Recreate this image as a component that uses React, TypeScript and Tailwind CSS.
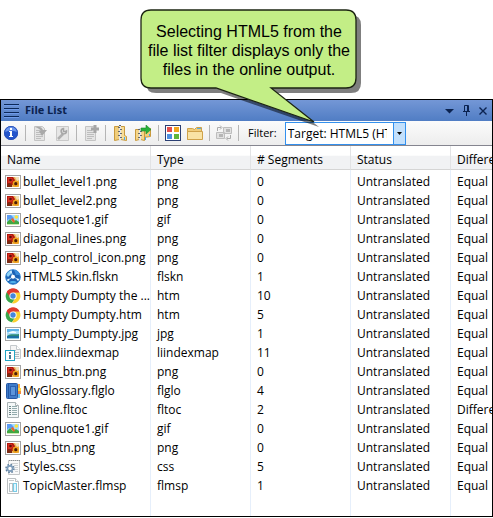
import type { ReactNode } from "react";

type IconKind =
  | "png" | "gif" | "jpg" | "skin" | "chrome" | "index" | "book" | "toc" | "css" | "master";

interface FileRow {
  name: string;
  type: string;
  segments: number;
  difference: string;
  icon: IconKind;
}

const files: FileRow[] = [
  { name: "bullet_level1.png", type: "png", segments: 0, difference: "Equal", icon: "png" },
  { name: "bullet_level2.png", type: "png", segments: 0, difference: "Equal", icon: "png" },
  { name: "closequote1.gif", type: "gif", segments: 0, difference: "Equal", icon: "gif" },
  { name: "diagonal_lines.png", type: "png", segments: 0, difference: "Equal", icon: "png" },
  { name: "help_control_icon.png", type: "png", segments: 0, difference: "Equal", icon: "png" },
  { name: "HTML5 Skin.flskn", type: "flskn", segments: 1, difference: "Equal", icon: "skin" },
  { name: "Humpty Dumpty the ...", type: "htm", segments: 10, difference: "Equal", icon: "chrome" },
  { name: "Humpty Dumpty.htm", type: "htm", segments: 5, difference: "Equal", icon: "chrome" },
  { name: "Humpty_Dumpty.jpg", type: "jpg", segments: 1, difference: "Equal", icon: "jpg" },
  { name: "Index.liindexmap", type: "liindexmap", segments: 11, difference: "Equal", icon: "index" },
  { name: "minus_btn.png", type: "png", segments: 0, difference: "Equal", icon: "png" },
  { name: "MyGlossary.flglo", type: "flglo", segments: 4, difference: "Equal", icon: "book" },
  { name: "Online.fltoc", type: "fltoc", segments: 2, difference: "Different", icon: "toc" },
  { name: "openquote1.gif", type: "gif", segments: 0, difference: "Equal", icon: "gif" },
  { name: "plus_btn.png", type: "png", segments: 0, difference: "Equal", icon: "png" },
  { name: "Styles.css", type: "css", segments: 5, difference: "Equal", icon: "css" },
  { name: "TopicMaster.flmsp", type: "flmsp", segments: 1, difference: "Equal", icon: "master" },
];

function PictureFrame({ sky, children }: { sky: string; children: ReactNode }) {
  return (
    <>
      <rect x="0.5" y="1.5" width="15" height="13" fill="#fff" stroke="#a3a3a3" />
      <rect x="2" y="3" width="12" height="10" fill={sky} />
      {children}
    </>
  );
}

const fileIcons: Record<IconKind, ReactNode> = {
  png: (
    <PictureFrame sky="#e9b45c">
      <path d="M2 3h6l2 3v3l-2 2H2z" fill="#b3160f" />
      <path d="M3 4h4l1 3-2 2H3z" fill="#d8331f" />
      <circle cx="5.5" cy="6" r="1.3" fill="#5c0d08" />
      <path d="M2 10l3-1 2 2v2H2z" fill="#7c2a12" />
      <circle cx="10.8" cy="9.7" r="3.2" fill="#f0a01c" />
      <circle cx="10.8" cy="9.7" r="1.6" fill="#4a1b08" />
      <path d="M10 3h4v3l-2 1z" fill="#f3dfb6" />
    </PictureFrame>
  ),
  gif: (
    <PictureFrame sky="#a5dcff">
      <path d="M2 3h4l3 3-2 2-3-1-2 2z" fill="#5a9cf4" />
      <circle cx="11.3" cy="5" r="1.8" fill="#ffe23a" />
      <path d="M2 12v-2l3-3 3 3 3-2 3 2v2z" fill="#3fa843" />
      <path d="M6 7l2-1 2 3-1 2-2-2z" fill="#e8622a" />
      <path d="M2 12h12v1H2z" fill="#c9ecae" />
    </PictureFrame>
  ),
  jpg: (
    <PictureFrame sky="#a9dcf8">
      <path d="M2 3h12v2H8L5 6H2z" fill="#5eb3e8" />
      <path d="M4 6l4-1 3 1v1H4z" fill="#f4fcff" />
      <path d="M2 10c4-3 8-1 12-2v3H2z" fill="#2d8a7a" />
      <path d="M2 10h12v3H2z" fill="#1c6fa4" />
      <path d="M2 12h12v1H2z" fill="#8ec9e4" />
    </PictureFrame>
  ),
  skin: (
    <>
      <circle cx="8" cy="8" r="7.3" fill="#1c62b4" stroke="#2f83cf" />
      <path d="M1.500 6A7 7 0 0 1 7 1.200L6 5 3 8z" fill="#8fd3f7" />
      <path d="M9 1a7 7 0 0 1 5.700 5L11 6z" fill="#3a8ddb" />
      <path d="M6 2.500l2 5M8 7.500l-5.500 4M8 7.500l6 3.500" stroke="#bfe4fb" strokeWidth="0.900" />
      <path d="M4 13c2.500 1.700 5.500 1.700 8 0-2-1.500-6-1.500-8 0z" fill="#4fb0ea" />
      <circle cx="8" cy="7.800" r="2" fill="#fff" />
      <circle cx="3.300" cy="10.800" r="1.100" fill="#e2f4ff" />
      <circle cx="12.800" cy="10.600" r="1.100" fill="#e2f4ff" />
      <circle cx="6" cy="2.900" r="0.900" fill="#e2f4ff" />
    </>
  ),
  chrome: (
    <>
      <path d="M8 8L1.7 4.2A7.3 7.3 0 0 1 14.5 4.6L8 4.8z" fill="#df3a2c" />
      <path d="M8 8L1.7 4.2A7.3 7.3 0 0 0 7 15.2L10.6 9.8z" fill="#3aa64b" />
      <path d="M8 4.6h6.5A7.3 7.3 0 0 1 7 15.3l3.8-5.5z" fill="#fbd02d" />
      <path d="M8 4.6h6.5A7.3 7.3 0 0 0 1.7 4.2L4.9 9z" fill="#df3a2c" />
      <circle cx="8" cy="8" r="3.6" fill="#fff" />
      <circle cx="8" cy="8" r="2.7" fill="#4386dc" />
    </>
  ),
  index: (
    <>
      <path d="M5.5.5h6l4 4v9h-10z" fill="#f5f5f5" stroke="#c4c9cc" />
      <path d="M11.5.5v4h4" fill="#fff" stroke="#c4c9cc" />
      <path d="M7 5.500h4M10 7.500h4M10 9.500h4M10 11.500h4" stroke="#b4babd" />
      <rect x="0.500" y="5.500" width="9" height="10" fill="#fff" stroke="#22a5c4" />
      <path d="M5 7v2M5 10v4" stroke="#1a5a78" strokeWidth="1.600" />
    </>
  ),
  book: (
    <>
      <path d="M12 1h2v14h-2z" fill="#fff" />
      <path d="M13 1h2v4h-2z" fill="#f7a93c" />
      <path d="M13 5h3v3h-3z" fill="#ffd63e" />
      <path d="M13 8h3v3h-3z" fill="#f28a3c" />
      <path d="M13 11h2v4h-2z" fill="#6cc0ec" />
      <rect x="1.500" y="0.500" width="11" height="15" rx="1" fill="#3f7cc9" stroke="#2558a6" />
      <path d="M3.500 1v14" stroke="#2558a6" />
      <rect x="5.500" y="3.500" width="5" height="9" fill="#5b95dc" stroke="#2a60ae" />
    </>
  ),
  toc: (
    <>
      <path d="M2.500.5h8l3 3v12h-11z" fill="#f4f8f8" stroke="#a9b2b4" />
      <path d="M10.500.5v3h3" fill="#fff" stroke="#a9b2b4" />
      <path d="M4 4.500h2M4 6.500h2M4 8.500h2M4 10.500h2M4 12.500h2" stroke="#6d8688" />
      <path d="M7 4.500h5M7 6.500h5M7 8.500h5M7 10.500h5M7 12.500h5" stroke="#93abad" />
    </>
  ),
  css: (
    <>
      <path d="M3.500 1.500h11v14h-11z" fill="#fafafa" stroke="#c3c6c8" />
      <path d="M4 1.500h11" stroke="#8b9093" strokeDasharray="1 1" />
      <path d="M6 4.500h7M9 6.500h4M10 8.500h3M10 10.500h3M10 12.500h3" stroke="#d0d3d5" />
      <circle cx="5" cy="9.500" r="3.900" fill="none" stroke="#5d7d9c" strokeWidth="1.700" strokeDasharray="1.600 1.460" />
      <circle cx="5" cy="9.500" r="2.600" fill="#fff" stroke="#7d9cba" strokeWidth="1.700" />
    </>
  ),
  master: (
    <>
      <path d="M2.500.5h8l3 3v12h-11z" fill="#fff" stroke="#bcc0c2" />
      <path d="M10.500.5v3h3" fill="#fff" stroke="#bcc0c2" />
      <path d="M4 2.500h5" stroke="#c6cacc" />
      <rect x="4.500" y="5.500" width="3" height="8" fill="#fff" stroke="#b9c2c6" />
      <rect x="8.500" y="5.500" width="3" height="8" fill="#e0f6fd" stroke="#79cbe6" />
    </>
  ),
};

function FileIcon({ kind }: { kind: IconKind }) {
  return (
    <svg viewBox="0 0 16 16" className="size-4 shrink-0" aria-hidden="true">
      {fileIcons[kind]}
    </svg>
  );
}

function ToolButton({ label, disabled, wide, children }: {
  label: string;
  disabled?: boolean;
  wide?: boolean;
  children: ReactNode;
}) {
  return (
    <button type="button" aria-label={label} disabled={disabled} className="shrink-0">
      <svg viewBox={wide ? "0 0 18 16" : "0 0 16 16"} className={wide ? "h-4 w-[18px]" : "size-4"}>
        {children}
      </svg>
    </button>
  );
}

function Separator() {
  return <span className="h-4 w-px shrink-0 bg-[#b5b5b5]" />;
}

function GreyPage() {
  return (
    <>
      <path d="M2.500 1.500h8l2 2v12h-10z" fill="#e4e4e4" stroke="#c4c4c4" />
      <path d="M4 5.500h5M4 7.500h7M4 9.500h7M4 11.500h7M4 13.500h5" stroke="#bdbdbd" />
    </>
  );
}

function Toolbar() {
  return (
    <div className="flex h-[25px] items-center gap-[6px] border-b border-[#85858f] bg-linear-to-b from-[#fbfbfb] to-[#ededed] pl-[2px]">
      <ToolButton label="Information">
        <circle cx="8" cy="8" r="7" fill="#2455cc" />
        <path d="M2 7a6 6 0 0 1 12 0c-4-2-8-2-12 0z" fill="#6d97ee" />
        <circle cx="8" cy="8" r="6.500" fill="none" stroke="#2a52b8" />
        <path d="M7 3h2v2H7zM6 6h3v5h1v1H6v-1h1V7H6z" fill="#fff" />
      </ToolButton>
      <Separator />
      <ToolButton label="Open file" disabled>
        <GreyPage />
        <path d="M3 2c4-1 7 0 8 3h4l-5 6-3-5h2C8 4 6 3 3 2z" fill="#a9a9a9" />
      </ToolButton>
      <ToolButton label="File properties" disabled>
        <path d="M2.500 1.500h12v14h-12z" fill="#e6e6e6" stroke="#c9c9c9" />
        <path d="M4 14l5-5" stroke="#b0b0b0" strokeWidth="2.500" />
        <path d="M12.500 6a2.700 2.700 0 1 1-3-2.500v3h2z" fill="none" stroke="#a6a6a6" strokeWidth="1.500" />
      </ToolButton>
      <Separator />
      <ToolButton label="Add file" disabled>
        <GreyPage />
        <path d="M12 0v8M8 4h8" stroke="#a6a6a6" strokeWidth="3" />
      </ToolButton>
      <Separator />
      <ToolButton label="Archive">
        <path d="M2.500 1.500h5v13l-5 1z" fill="#f0cd7b" stroke="#c99a3d" />
        <path d="M8.500 1.500h4v9l2 1v4l-6-1z" fill="#f6dc98" stroke="#c99a3d" />
        <path d="M7 0h2v16H7z" fill="#e5e5e5" />
        <path d="M7 .5h2M6 2.500h2M8 4.500h2M6 6.500h2M8 8.500h2M6 10.500h2M8 12.500h2" stroke="#62666c" />
        <path d="M12.500 12v3" stroke="#4aa8e8" />
      </ToolButton>
      <ToolButton label="Extract archive" wide>
        <path d="M9.500 3.500h7v8l-7 1z" fill="#f0cd7b" stroke="#c99a3d" />
        <path d="M1.500 4.500h4v10l-4 1zM6.500 4.500h4v11l-4-1z" fill="#f4d58a" stroke="#c99a3d" />
        <path d="M5 3h2v13H5z" fill="#e5e5e5" />
        <path d="M4 4.500h2M6 6.500h2M4 8.500h2M6 10.500h2M4 12.500h2" stroke="#62666c" />
        <path d="M7 3h5V0l5 4.500L12 9V6H7z" fill="#28b13b" stroke="#1c8b2c" strokeWidth="0.600" />
        <path d="M11.500 12v3M15.500 9v2" stroke="#4aa8e8" />
      </ToolButton>
      <Separator />
      <ToolButton label="Tile view">
        <rect x="0.500" y="0.500" width="15" height="15" fill="#fff" stroke="#2b3f73" />
        <path d="M2 2h5v5H2z" fill="#e4504b" />
        <path d="M9 2h5v5H9z" fill="#f0a51e" />
        <path d="M2 9h5v5H2z" fill="#4d8fe0" />
        <path d="M9 9h5v5H9z" fill="#62b63a" />
      </ToolButton>
      <ToolButton label="Open folder">
        <path d="M.5 14.500v-11h5l2 1 2-2h5v12z" fill="#f0cd7b" stroke="#cfa24a" />
        <path d="M.5 6.500h15v8H.5z" fill="#f9e3a4" stroke="#cfa24a" />
        <path d="M10 3.500h4" stroke="#5aaee0" />
      </ToolButton>
      <Separator />
      <ToolButton label="Swap files" disabled>
        <path d="M7.500 2.500h8v6h-8zM.5 7.500h8v6h-8z" fill="#e1e1e1" stroke="#bdbdbd" />
        <path d="M10 4h4v3h-4zM3 9h4v3H3z" fill="#b5b5b5" />
        <path d="M1.500 6V2.500H5M4 .5l2 2-2 2M14.500 10v3.500H11M12 11.500l-2 2 2 2" fill="none" stroke="#ababab" />
      </ToolButton>
      <Separator />
      <div className="flex items-center gap-[8px] pl-[3px]">
        <label htmlFor="file-filter" className="text-[11px]">Filter:</label>
        <div className="relative h-[23px] w-[121px]">
          <select
            id="file-filter"
            defaultValue="html5"
            className="block h-full w-full appearance-none overflow-hidden border border-[#3390ee] bg-white pr-[18px] pl-[2px] text-[12px] leading-[19px] outline-none"
          >
            <option value="html5">Target: HTML5 (HTML5)</option>
          </select>
          <span className="pointer-events-none absolute inset-y-0 right-0 flex w-[13px] items-center justify-center border border-[#3390ee] bg-[#c3e0fc]">
            <svg viewBox="0 0 5 3" className="h-[3px] w-[5px]" aria-hidden="true">
              <path d="M0 0h5L2.500 3z" fill="#000" />
            </svg>
          </span>
        </div>
      </div>
    </div>
  );
}

function TitleBar() {
  return (
    <div className="flex h-[21px] items-center bg-linear-to-b from-[#7497d6] to-[#507dc4] pr-[5px] pl-[3px]">
      <svg viewBox="0 0 15 14" className="h-[14px] w-[15px]" aria-hidden="true">
        <path d="M0 .5h15M0 4.500h15M0 8.500h15M0 12.500h15" stroke="#0c2858" />
        <path d="M0 1.500h15M0 5.500h15M0 9.500h15M0 13.500h15" stroke="#6f9ceb" />
      </svg>
      <h1 className="flex-1 pl-[6px] text-[11px] font-bold text-[#0b2350]">File List</h1>
      <div className="flex items-center gap-[9px]">
        <button type="button" aria-label="Window menu">
          <svg viewBox="0 0 9 9" className="size-[9px]">
            <path d="M0 3h9L4.500 7.500z" fill="#0b2350" />
          </svg>
        </button>
        <button type="button" aria-label="Pin">
          <svg viewBox="0 0 7 11" className="h-[11px] w-[7px]">
            <path d="M1.500 6V.5h4V6M0 6.500h7M3.500 7v4M4.500 1v5" fill="none" stroke="#0b2350" />
          </svg>
        </button>
        <button type="button" aria-label="Close">
          <svg viewBox="0 0 8 8" className="size-2">
            <path d="M.5.5l7 7M7.500.5l-7 7" stroke="#0b2350" strokeWidth="1.400" />
          </svg>
        </button>
      </div>
    </div>
  );
}

const headings = ["Name", "Type", "# Segments", "Status", "Difference"];

function FileTable() {
  const cell = "overflow-hidden border-r border-[#e6effb] p-0 pl-[6px] last:border-r-0";
  return (
    <table className="w-full table-fixed border-separate border-spacing-0 text-left text-[12px] leading-[19px] whitespace-nowrap">
      <colgroup>
        <col className="w-[150px]" />
        <col className="w-[100px]" />
        <col className="w-[100px]" />
        <col className="w-[100px]" />
        <col />
      </colgroup>
      <thead>
        <tr>
          {headings.map((heading) => (
            <th
              key={heading}
              scope="col"
              className="h-6 overflow-hidden border-r border-b border-r-[#e2e3e5] border-b-[#d5d5d5] bg-linear-to-b from-white from-40% to-[#f1f2f4] to-45% p-0 pt-[4px] pl-[6px] font-normal last:border-r-0"
            >
              {heading}
            </th>
          ))}
        </tr>
      </thead>
      <tbody>
        <tr aria-hidden="true">
          {headings.map((heading) => (
            <td key={heading} className={cell + " h-[2px]"} />
          ))}
        </tr>
        {files.map((file) => (
          <tr key={file.name}>
            <td className="overflow-hidden border-r border-[#e6effb] p-0 pl-[4px]">
              <span className="flex h-[19px] items-center gap-[2px]">
                <FileIcon kind={file.icon} />
                {file.name}
              </span>
            </td>
            <td className={cell}>{file.type}</td>
            <td className={cell}>{file.segments}</td>
            <td className={cell}>Untranslated</td>
            <td className={cell}>{file.difference}</td>
          </tr>
        ))}
        <tr aria-hidden="true">
          {headings.map((heading) => (
            <td key={heading} className={cell + " h-[21px]"} />
          ))}
        </tr>
      </tbody>
    </table>
  );
}

const calloutOutline =
  "M11 1H206Q216 1 216 11V69Q216 79 206 79H131L174 113L76 79H11Q1 79 1 69V11Q1 1 11 1Z";

function Callout() {
  return (
    <aside className="absolute top-[9px] left-[140px] w-[218px]">
      <svg viewBox="0 0 222 118" className="absolute top-0 left-0 h-[118px] w-[222px]" aria-hidden="true">
        <path d={calloutOutline} transform="translate(5 5)" fill="#000" fillOpacity="0.5" />
        <path d={calloutOutline} fill="#c3ee86" stroke="#1c2412" strokeWidth="1.3" />
      </svg>
      <p className="relative pt-[13px] text-center font-['Liberation_Sans',Arial,sans-serif] text-[16px] leading-[19px]">
        Selecting HTML5 from the
        <br />
        file list filter displays only the
        <br />
        files in the online output.
      </p>
    </aside>
  );
}

export default function App() {
  return (
    <main className="relative bg-white pt-[99px] font-['Open_Sans','Noto_Sans',sans-serif] text-black">
      <section aria-label="File List" className="overflow-hidden border border-black">
        <TitleBar />
        <Toolbar />
        <FileTable />
      </section>
      <Callout />
    </main>
  );
}
